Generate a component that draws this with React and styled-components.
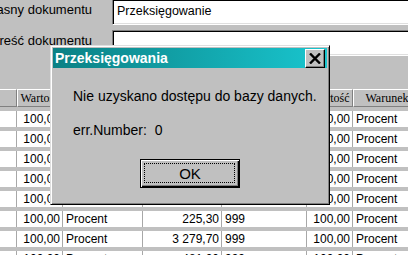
import React from 'react';
import styled, { createGlobalStyle } from 'styled-components';

const GlobalStyle = createGlobalStyle`
  html, body {
    margin: 0;
    padding: 0;
    background: #c0c0c0;
    overflow: hidden;
  }
  body {
    font-family: "Liberation Sans", Arial, sans-serif;
  }
`;

const Screen = styled.div`
  position: relative;
  width: 408px;
  height: 255px;
  overflow: hidden;
  background: #c0c0c0;
`;

const Form = styled.div`
  display: grid;
  grid-template-columns: 112px 1fr;
  row-gap: 5px;
  margin-top: -1px;
`;

const Label = styled.div`
  display: flex;
  justify-content: flex-end;
  align-items: flex-start;
  height: 26px;
  padding: 3px 20px 0 0;
  box-sizing: border-box;
  overflow: hidden;
  white-space: nowrap;
  font-size: 13px;
  color: #000;
`;

const TextBox = styled.div`
  height: 26px;
  width: calc(100% + 20px);
  box-sizing: border-box;
  background: #fff;
  border-style: solid;
  border-width: 1px;
  border-color: #808080 #fff #fff #808080;
  box-shadow: inset 1px 1px #000, inset -1px -1px #dfdfdf;
  padding: 4px 4px 0;
  font-size: 12.5px;
  white-space: nowrap;
`;

const Table = styled.div`
  display: flex;
  flex-direction: column;
  gap: 4px;
  margin-top: 33px;
  margin-left: -1px;
`;

const cols = '18px 46px 80px 79px 85px 46px 68px 40px';

const HeaderRow = styled.div`
  display: grid;
  grid-template-columns: ${cols};
  height: 18px;
`;

const HeadCell = styled.div`
  box-sizing: border-box;
  border-style: solid;
  border-width: 1px;
  border-color: #fff #808080 #808080 #fff;
  font-family: "Liberation Serif", "Times New Roman", serif;
  font-size: 12px;
  line-height: 16px;
  text-align: center;
  white-space: nowrap;
  overflow: hidden;
  color: #000;
`;

const Row = styled.div`
  display: grid;
  grid-template-columns: ${cols};
  height: 16px;
`;

const Cell = styled.div`
  box-sizing: border-box;
  background: #fff;
  border-right: 1px solid #a8a8a8;
  font-size: 12px;
  line-height: 16px;
  padding: 0 2px 0 3px;
  text-align: ${(p) => (p.$num ? 'right' : 'left')};
  white-space: nowrap;
  overflow: hidden;
  color: #000;
`;

const Dialog = styled.div`
  position: absolute;
  left: 50px;
  top: 45px;
  width: 280px;
  height: 160px;
  box-sizing: border-box;
  background: #c0c0c0;
  border: 1px solid;
  border-color: #dfdfdf #000 #000 #dfdfdf;
  box-shadow: inset 1px 1px #fff, inset -1px -1px #808080;
  padding: 2px;
  display: flex;
  flex-direction: column;
`;

const TitleBar = styled.div`
  height: 20px;
  display: flex;
  align-items: center;
  justify-content: space-between;
  padding: 0 2px 0 2px;
  background: linear-gradient(to right, #0b8084, #19c6cf);
`;

const Title = styled.span`
  color: #fff;
  font-weight: bold;
  font-size: 14px;
`;

const CloseButton = styled.button`
  width: 20px;
  height: 19px;
  margin: 0;
  padding: 0;
  box-sizing: border-box;
  background: #c0c0c0;
  border: 1px solid;
  border-color: #fff #000 #000 #fff;
  box-shadow: inset -1px -1px #808080;
  display: flex;
  align-items: center;
  justify-content: center;
`;

const Body = styled.div`
  flex: 1;
  display: flex;
  flex-direction: column;
  padding: 20px 0 0 20px;
  font-size: 14px;
  color: #000;
`;

const Message = styled.div`
  line-height: 16px;
  white-space: pre;
  margin-bottom: ${(p) => p.$gap || 0}px;
`;

const ButtonRow = styled.div`
  display: flex;
  justify-content: center;
  margin-left: -20px;
`;

const OkButton = styled.button`
  position: relative;
  width: 100px;
  height: 29px;
  box-sizing: border-box;
  background: #c0c0c0;
  border: 1px solid #000;
  box-shadow: inset 1px 1px #fff, inset -1px -1px #000, inset -2px -2px #808080;
  font-family: "Liberation Sans", Arial, sans-serif;
  font-size: 15px;
  color: #000;
  padding: 0;
  &::after {
    content: '';
    position: absolute;
    inset: 3px 4px 4px 3px;
    border: 1px dotted #000;
  }
`;

const rows = [
  ['100,00', 'Procent', '118,40', '999', '100,00', 'Procent'],
  ['100,00', 'Procent', '512,00', '999', '100,00', 'Procent'],
  ['100,00', 'Procent', '97,60', '999', '100,00', 'Procent'],
  ['100,00', 'Procent', '1 045,20', '999', '100,00', 'Procent'],
  ['100,00', 'Procent', '330,00', '999', '100,00', 'Procent'],
  ['100,00', 'Procent', '225,30', '999', '100,00', 'Procent'],
  ['100,00', 'Procent', '3 279,70', '999', '100,00', 'Procent'],
  ['100,00', 'Procent', '481,00', '999', '100,00', 'Procent'],
];

const CloseIcon = () => (
  <svg width="12" height="11" viewBox="0 0 12 11">
    <path d="M1 0.5 L11 10.5 M11 0.5 L1 10.5" stroke="#000" strokeWidth="2.4" />
  </svg>
);

export default function App() {
  return (
    <Screen>
      <GlobalStyle />
      <Form>
        <Label>Numer własny dokumentu</Label>
        <TextBox>Przeksięgowanie</TextBox>
        <Label>Treść dokumentu</Label>
        <TextBox />
      </Form>

      <Table>
        <HeaderRow>
          <HeadCell />
          <HeadCell>Wartość</HeadCell>
          <HeadCell>Warunek</HeadCell>
          <HeadCell>Kwota</HeadCell>
          <HeadCell>Konto</HeadCell>
          <HeadCell>Wartość</HeadCell>
          <HeadCell>Warunek</HeadCell>
          <HeadCell />
        </HeaderRow>
        {rows.map((r, i) => (
          <Row key={i}>
            <Cell />
            <Cell $num>{r[0]}</Cell>
            <Cell>{r[1]}</Cell>
            <Cell $num>{r[2]}</Cell>
            <Cell>{r[3]}</Cell>
            <Cell $num>{r[4]}</Cell>
            <Cell>{r[5]}</Cell>
            <Cell />
          </Row>
        ))}
      </Table>

      <Dialog>
        <TitleBar>
          <Title>Przeksięgowania</Title>
          <CloseButton>
            <CloseIcon />
          </CloseButton>
        </TitleBar>
        <Body>
          <Message $gap={18}>Nie uzyskano dostępu do bazy danych.</Message>
          <Message $gap={21}>{'err.Number:  0'}</Message>
          <ButtonRow>
            <OkButton>OK</OkButton>
          </ButtonRow>
        </Body>
      </Dialog>
    </Screen>
  );
}
